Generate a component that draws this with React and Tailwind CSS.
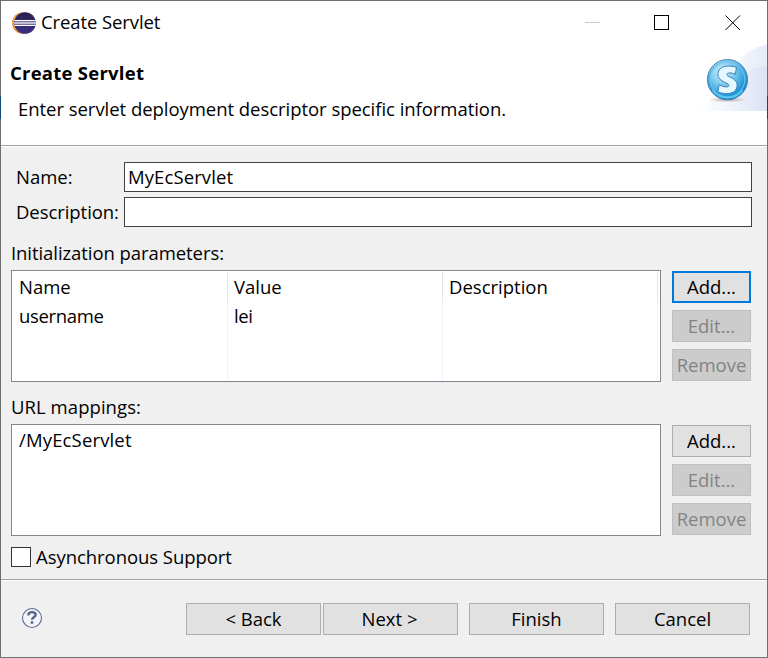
import React from "react";

function EclipseIcon() {
  return (
    <svg width="24" height="22" viewBox="0 0 24 22" className="block">
      <defs>
        <linearGradient id="sun" x1="0" y1="0" x2="0" y2="1">
          <stop offset="0" stopColor="#f0a248" />
          <stop offset="1" stopColor="#f08a1c" />
        </linearGradient>
        <linearGradient id="moon" x1="0" y1="0" x2="0" y2="1">
          <stop offset="0" stopColor="#2a2050" />
          <stop offset="1" stopColor="#3c2f86" />
        </linearGradient>
      </defs>
      <ellipse cx="11" cy="11" rx="11" ry="10.8" fill="url(#sun)" />
      <ellipse cx="12.4" cy="11" rx="10.6" ry="10.6" fill="#fbe3c4" />
      <ellipse cx="13" cy="11" rx="10.8" ry="10.8" fill="url(#moon)" />
      <rect x="2.6" y="8" width="21" height="1.2" fill="#fff" />
      <rect x="2.3" y="10.1" width="21.6" height="1.8" fill="#d9d8e6" />
      <rect x="2.6" y="12.8" width="21" height="1.2" fill="#fff" />
      <rect x="2.4" y="9.2" width="21.4" height="0.9" fill="#7d76a6" />
      <rect x="2.4" y="11.9" width="21.4" height="0.9" fill="#7d76a6" />
    </svg>
  );
}

function Banner() {
  return (
    <svg width="75" height="67" viewBox="692 44 75 67" className="block">
      <defs>
        <linearGradient id="sweepA" x1="692" y1="0" x2="767" y2="0" gradientUnits="userSpaceOnUse">
          <stop offset="0" stopColor="#ffffff" />
          <stop offset="0.6" stopColor="#f3f6fc" />
          <stop offset="1" stopColor="#e6ebf8" />
        </linearGradient>
        <linearGradient id="sweepB" x1="700" y1="0" x2="767" y2="0" gradientUnits="userSpaceOnUse">
          <stop offset="0" stopColor="#f6f8fd" stopOpacity="0" />
          <stop offset="1" stopColor="#dbe2f5" />
        </linearGradient>
        <linearGradient id="ball" x1="0" y1="0" x2="0.35" y2="1">
          <stop offset="0" stopColor="#a5daf2" />
          <stop offset="0.45" stopColor="#43b1e4" />
          <stop offset="1" stopColor="#1288cf" />
        </linearGradient>
        <radialGradient id="glow" cx="0.35" cy="0.28" r="0.7">
          <stop offset="0" stopColor="#d4eefa" />
          <stop offset="0.45" stopColor="#86cfee" />
          <stop offset="1" stopColor="#1d98d8" />
        </radialGradient>
        <radialGradient id="shade">
          <stop offset="0" stopColor="#7d7580" stopOpacity="0.75" />
          <stop offset="1" stopColor="#b8a8a8" stopOpacity="0" />
        </radialGradient>
      </defs>
      <path d="M692 111 C715 104 728 75 738 62 C746 52 757 46 767 45 V111 Z" fill="url(#sweepA)" />
      <path d="M698 111 C718 104 735 76 748 71 C755 68 761 67 767 67 V111 Z" fill="url(#sweepB)" />
      <ellipse cx="727.5" cy="99.7" rx="20" ry="2.8" fill="url(#shade)" />
      <circle cx="727.5" cy="79.6" r="20.1" fill="url(#ball)" stroke="#3e78aa" strokeWidth="0.9" />
      <circle cx="727.5" cy="79.6" r="17.3" fill="url(#glow)" stroke="#7cc8ec" strokeWidth="0.9" />
      <path d="M712.5 90 A18.4 18.4 0 0 0 742.5 90" fill="none" stroke="#56c6f1" strokeWidth="1.8" />
      <path
        d="M736.6 67.4 L735.2 74.2 C731.8 72.6 727.2 72.4 726.8 74.2 C726.5 75.8 729.2 76.6 731.9 78 C736.4 80.3 738 84 736.7 88 C734.8 94 725.8 95 717.9 92 L719.2 84.8 C723.6 87.2 728.2 87.6 728.8 85.8 C729.3 84.2 727 83.3 724.2 82 C719 79.5 717.2 76.2 718.2 72.2 C719.8 65.8 728.2 64.7 736.6 67.4 Z"
        fill="#e4f7fe"
        stroke="#3f7dba"
        strokeWidth="1"
      />
    </svg>
  );
}

function HelpIcon() {
  return (
    <svg width="22" height="22" viewBox="0 0 22 22" className="block">
      <circle cx="11" cy="11" r="9.5" fill="#f4f5f8" stroke="#5c6c8c" strokeWidth="1.1" />
      <path d="M7.2 8.3 C7.4 6 8.8 5.1 11 5.1 C13.5 5.1 14.7 6.2 14.7 7.8 C14.7 10.2 11 10.2 11 12.8" fill="none" stroke="#52668f" strokeWidth="2.4" />
      <rect x="9.7" y="14.2" width="2.6" height="2.6" rx="0.6" fill="#52668f" />
    </svg>
  );
}

function Button({ children, className = "", disabled, focused }) {
  const tone = disabled
    ? "border border-[#bfbfbf] bg-[#cccccc] text-[#838383]"
    : focused
      ? "border-2 border-[#0078d7] bg-[#e1e1e1]"
      : "border border-[#adadad] bg-[#e1e1e1]";
  return (
    <button disabled={disabled} className={`flex h-8 shrink-0 items-center justify-center whitespace-nowrap ${tone} ${className}`}>
      {children}
    </button>
  );
}

function SideButtons({ focused }) {
  return (
    <div className="mt-px flex w-[79px] flex-col gap-[7px]">
      <Button focused={focused}>Add...</Button>
      <Button disabled>Edit...</Button>
      <Button disabled>Remove</Button>
    </div>
  );
}

function Column({ title, value }) {
  return (
    <div className="flex w-[215px] flex-col">
      <div className="h-[30px] border-r border-[#e5e5e5] pl-1.5 leading-[30px]">{title}</div>
      <div className="flex-1 border-r border-[#edf3fb] pl-1.5 leading-[27px] tracking-[-0.35px]">{value}</div>
    </div>
  );
}

function Separator() {
  return <div className="h-[2px] shrink-0 border-b border-t border-b-white border-t-[#a0a0a0]" />;
}

export default function App() {
  return (
    <div className="flex h-[658px] w-[768px] border-y border-[#6e6e6e] font-['Open_Sans','Noto_Sans',sans-serif] text-[18.5px] leading-6 text-black">
      <div className="w-px bg-[linear-gradient(to_bottom,#6e6e6e_95px,#134a7c_95px,#134a7c_118px,#6e6e6e_118px)]" />
      <div className="flex w-[766px] flex-col bg-[#f0f0f0]">
        <header className="flex h-[144px] flex-col bg-white">
          <div className="flex h-[43px] items-center pl-[11px]">
            <EclipseIcon />
            <span className="-mt-0.5 ml-[5px] flex-1 tracking-[-0.1px]">Create Servlet</span>
            <svg width="156" height="16" viewBox="0 0 156 16" shapeRendering="crispEdges" className="mr-[26px] -mt-0.5 block">
              <path d="M0 8.5 H15" stroke="#cccccc" />
              <rect x="69.5" y="1.5" width="14" height="14" fill="none" stroke="#000" />
              <path d="M140.5 1.5 L155 16 M155 1.5 L140.5 16" stroke="#000" shapeRendering="auto" />
            </svg>
          </div>
          <div className="flex">
            <div className="flex-1">
              <h1 className="mt-[17px] pl-[9px] font-bold tracking-[0.25px]">Create Servlet</h1>
              <p className="mt-3 whitespace-nowrap pl-[17px] tracking-[-0.04px]">Enter servlet deployment descriptor specific information.</p>
            </div>
            <Banner />
          </div>
        </header>
        <Separator />

        <main className="flex h-[432px] shrink-0 flex-col pl-[10px] pt-[15px]">
          <div className="flex h-[30px] items-center">
            <label className="w-[113px] pl-[5px]">Name:</label>
            <div className="flex h-[30px] w-[628px] items-center border border-[#414141] bg-white pl-[3px] tracking-[0.1px]">MyEcServlet</div>
          </div>
          <div className="mt-[5px] flex h-[30px] items-center">
            <label className="w-[113px] whitespace-nowrap pl-[5px] tracking-[-0.06px]">Description:</label>
            <div className="h-[30px] w-[628px] border border-[#414141] bg-white" />
          </div>

          <div className="mt-[14px] h-[29px] tracking-[-0.07px]">Initialization parameters:</div>
          <div className="flex gap-[11px]">
            <div className="flex h-[112px] w-[650px] border border-[#828790] bg-white p-px">
              <Column title="Name" value="username" />
              <Column title="Value" value="lei" />
              <Column title="Description" value="" />
            </div>
            <SideButtons focused />
          </div>

          <div className="mt-[13px] h-[29px] tracking-[0.06px]">URL mappings:</div>
          <div className="flex gap-[11px]">
            <div className="h-[112px] w-[650px] border border-[#828790] bg-white pl-[7px] pt-[3px] tracking-[0.15px]">/MyEcServlet</div>
            <SideButtons />
          </div>

          <div className="mt-[11px] flex h-5 items-center gap-[5px]">
            <div className="h-5 w-5 border border-[#333333] bg-white" />
            <span className="tracking-[-0.05px]">Asynchronous Support</span>
          </div>
        </main>

        <Separator />
        <footer className="flex items-start pl-[20px] pt-[22px]">
          <div className="mt-1">
            <HelpIcon />
          </div>
          <Button className="ml-[143px] w-[135px]">&lt; Back</Button>
          <Button className="ml-[2px] w-[135px] pr-[2px]">Next &gt;</Button>
          <Button className="ml-[11px] w-[135px]">Finish</Button>
          <Button className="ml-[11px] w-[135px]">Cancel</Button>
        </footer>
      </div>
      <div className="w-px bg-[linear-gradient(to_bottom,#6e6e6e_95px,#1d4468_95px,#1d4468_118px,#6e6e6e_118px)]" />
    </div>
  );
}
